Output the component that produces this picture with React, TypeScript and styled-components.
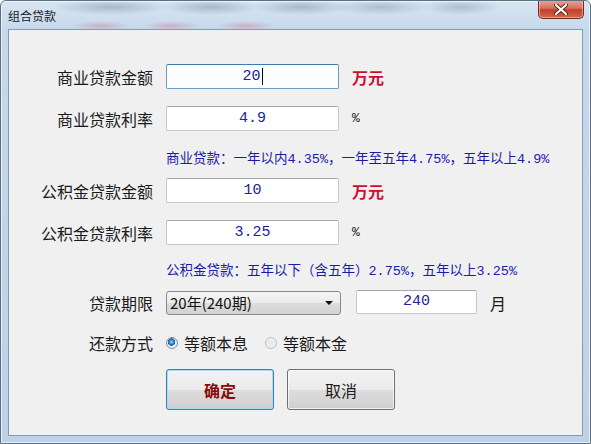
import styled, { createGlobalStyle } from 'styled-components';

const GlobalStyle = createGlobalStyle`
  html, body {
    margin: 0;
    padding: 0;
    background: #ffffff;
  }
  body {
    font-family: "Noto Sans CJK SC", "Liberation Sans", sans-serif;
  }
`;

const Window = styled.div`
  width: 591px;
  height: 444px;
  box-sizing: border-box;
  display: flex;
  flex-direction: column;
  border: 1px solid #5e6f82;
  border-radius: 6px 6px 0 0;
  background:
    radial-gradient(ellipse 60px 8px at 110px 6px, rgba(90, 100, 120, 0.35), transparent),
    radial-gradient(ellipse 50px 8px at 210px 6px, rgba(90, 100, 120, 0.35), transparent),
    radial-gradient(ellipse 50px 8px at 300px 6px, rgba(90, 100, 120, 0.35), transparent),
    radial-gradient(ellipse 50px 8px at 380px 6px, rgba(90, 100, 120, 0.3), transparent),
    radial-gradient(ellipse 40px 8px at 460px 6px, rgba(90, 100, 120, 0.3), transparent),
    radial-gradient(ellipse 30px 5px at 100px 25px, rgba(200, 80, 90, 0.3), transparent),
    radial-gradient(ellipse 30px 5px at 170px 25px, rgba(200, 80, 90, 0.3), transparent),
    radial-gradient(ellipse 30px 5px at 245px 25px, rgba(200, 80, 90, 0.3), transparent),
    linear-gradient(180deg, #d9e6f3 0%, #c5d8ec 30px, #bdd1e8 100%);
  box-shadow: inset 0 0 0 1px rgba(255, 255, 255, 0.6);
  overflow: hidden;
`;

const TitleBar = styled.div`
  height: 28px;
  display: flex;
  align-items: flex-start;
  justify-content: space-between;
  padding: 0 6px 0 7px;
`;

const Title = styled.div`
  font-size: 12px;
  line-height: 14px;
  margin-top: 8px;
  color: #1b1b1b;
`;

const CloseButton = styled.div`
  width: 46px;
  height: 19px;
  margin-top: -1px;
  box-sizing: border-box;
  border: 1px solid #6b2c24;
  border-top: none;
  border-radius: 0 0 5px 5px;
  background: linear-gradient(180deg, #e9a89b 0%, #d7705f 45%, #c2402c 55%, #d3654b 100%);
  box-shadow: inset 0 0 0 1px rgba(255, 220, 210, 0.5);
  display: flex;
  align-items: center;
  justify-content: center;
`;

const Client = styled.div`
  flex: 1;
  margin: 0 7px 7px 7px;
  border: 1px solid #8799ad;
  background: #f0f0f0;
  display: flex;
  flex-direction: column;
`;

const Row = styled.div<{ $mt: number }>`
  display: grid;
  grid-template-columns: 144px 173px auto;
  column-gap: 13px;
  align-items: center;
  height: 25px;
  margin-top: ${({ $mt }) => $mt}px;
`;

const Label = styled.div`
  text-align: right;
  font-size: 16px;
  color: #1a1a1a;
  white-space: nowrap;
`;

const TextBox = styled.div<{ $focused?: boolean }>`
  height: 25px;
  box-sizing: border-box;
  border: 1px solid ${({ $focused }) => ($focused ? '#6d9ac5' : '#c5c9cf')};
  border-top-color: ${({ $focused }) => ($focused ? '#3d7bad' : '#a4a8ae')};
  border-radius: 2px;
  background: ${({ $focused }) => ($focused ? '#fbfdff' : '#ffffff')};
  display: flex;
  align-items: center;
  justify-content: center;
  font-size: 15px;
  color: #22229a;
  font-family: "Liberation Mono", "Noto Sans CJK SC", monospace;
`;

const Caret = styled.span`
  display: inline-block;
  width: 1px;
  height: 17px;
  background: #000;
  margin-left: 1px;
`;

const Unit = styled.div<{ $strong?: boolean }>`
  font-size: ${({ $strong }) => ($strong ? '16px' : '13px')};
  font-weight: ${({ $strong }) => ($strong ? 700 : 400)};
  color: ${({ $strong }) => ($strong ? '#c8102e' : '#1a1a1a')};
  font-family: ${({ $strong }) =>
    $strong ? '"Noto Sans CJK SC", sans-serif' : '"Liberation Mono", monospace'};
`;

const Info = styled.div<{ $mt: number }>`
  height: 20px;
  margin-top: ${({ $mt }) => $mt}px;
  padding-left: 157px;
  display: flex;
  align-items: center;
  font-family: "Liberation Mono", "Noto Sans CJK SC", monospace;
  font-size: 13.5px;
  color: #1c1ca8;
  white-space: nowrap;
`;

const Controls = styled.div`
  grid-column: 2 / span 2;
  display: flex;
  align-items: center;
  gap: 13px;
  white-space: nowrap;
`;

const Select = styled.div`
  flex: 0 0 175px;
  height: 24px;
  box-sizing: border-box;
  border: 1px solid #8a8a8a;
  border-radius: 3px;
  background: linear-gradient(180deg, #f4f4f4 0%, #ececec 50%, #dcdcdc 51%, #d2d2d2 100%);
  display: flex;
  align-items: center;
  justify-content: space-between;
  padding: 0 7px 0 3px;
  font-size: 15px;
  color: #111;
`;

const Arrow = styled.span`
  width: 0;
  height: 0;
  border-left: 4px solid transparent;
  border-right: 4px solid transparent;
  border-top: 4px solid #111;
`;

const PeriodBox = styled(TextBox)`
  flex: 0 0 121px;
  height: 24px;
  margin-left: 2px;
  margin-top: -2px;
`;

const Radios = styled.div`
  grid-column: 2 / span 2;
  display: flex;
  align-items: center;
  gap: 17px;
  white-space: nowrap;
`;

const RadioItem = styled.label`
  display: flex;
  align-items: center;
  gap: 6px;
  font-size: 16px;
  color: #1a1a1a;
`;

const RadioDot = styled.span<{ $checked?: boolean }>`
  flex: 0 0 12px;
  height: 12px;
  box-sizing: border-box;
  border-radius: 50%;
  border: 1px solid ${({ $checked }) => ($checked ? '#7b8ea3' : '#b8bfc6')};
  background: ${({ $checked }) =>
    $checked
      ? 'radial-gradient(circle at 45% 40%, #9fd3f5 0, #2f7fbe 2.5px, #1e5a92 3.5px, #e8edf2 4px, #f8f8f8 100%)'
      : 'radial-gradient(circle, #e4e7ea 0, #f2f3f4 100%)'};
`;

const ButtonRow = styled.div<{ $mt: number }>`
  display: flex;
  gap: 13px;
  padding-left: 157px;
  margin-top: ${({ $mt }) => $mt}px;
`;

const Button = styled.div<{ $default?: boolean }>`
  width: 108px;
  height: 41px;
  box-sizing: border-box;
  border: 1px solid ${({ $default }) => ($default ? '#3c7fb1' : '#707070')};
  border-radius: 3px;
  background: linear-gradient(180deg, #f2f2f2 0%, #ebebeb 50%, #dddddd 51%, #cfcfcf 100%);
  box-shadow: inset 0 0 0 1px ${({ $default }) => ($default ? '#a8dcf4' : 'rgba(255,255,255,0.7)')};
  display: flex;
  align-items: center;
  justify-content: center;
  font-size: 16px;
  font-weight: ${({ $default }) => ($default ? 700 : 400)};
  color: ${({ $default }) => ($default ? '#8a0a0a' : '#1a1a1a')};
`;

export default function App() {
  return (
    <>
      <GlobalStyle />
      <Window>
        <TitleBar>
          <Title>组合贷款</Title>
          <CloseButton>
            <svg width="14" height="11" viewBox="0 0 14 11">
              <path d="M2 1 L12 10 M12 1 L2 10" stroke="#5a1e16" strokeWidth="4" strokeLinecap="round" />
              <path d="M2 1 L12 10 M12 1 L2 10" stroke="#ffffff" strokeWidth="2.2" strokeLinecap="round" />
            </svg>
          </CloseButton>
        </TitleBar>
        <Client>
          <Row $mt={34}>
            <Label>商业贷款金额</Label>
            <TextBox $focused>20<Caret /></TextBox>
            <Unit $strong>万元</Unit>
          </Row>
          <Row $mt={17}>
            <Label>商业贷款利率</Label>
            <TextBox>4.9</TextBox>
            <Unit>%</Unit>
          </Row>
          <Info $mt={16}>商业贷款：一年以内4.35%，一年至五年4.75%，五年以上4.9%</Info>
          <Row $mt={11}>
            <Label>公积金贷款金额</Label>
            <TextBox>10</TextBox>
            <Unit $strong>万元</Unit>
          </Row>
          <Row $mt={17}>
            <Label>公积金贷款利率</Label>
            <TextBox>3.25</TextBox>
            <Unit>%</Unit>
          </Row>
          <Info $mt={14}>公积金贷款：五年以下（含五年）2.75%，五年以上3.25%</Info>
          <Row $mt={11}>
            <Label>贷款期限</Label>
            <Controls>
              <Select>
                <span>20年(240期)</span>
                <Arrow />
              </Select>
              <PeriodBox>240</PeriodBox>
              <Label>月</Label>
            </Controls>
          </Row>
          <Row $mt={15}>
            <Label>还款方式</Label>
            <Radios>
              <RadioItem><RadioDot $checked />等额本息</RadioItem>
              <RadioItem><RadioDot />等额本金</RadioItem>
            </Radios>
          </Row>
          <ButtonRow $mt={14}>
            <Button $default>确定</Button>
            <Button>取消</Button>
          </ButtonRow>
        </Client>
      </Window>
    </>
  );
}
